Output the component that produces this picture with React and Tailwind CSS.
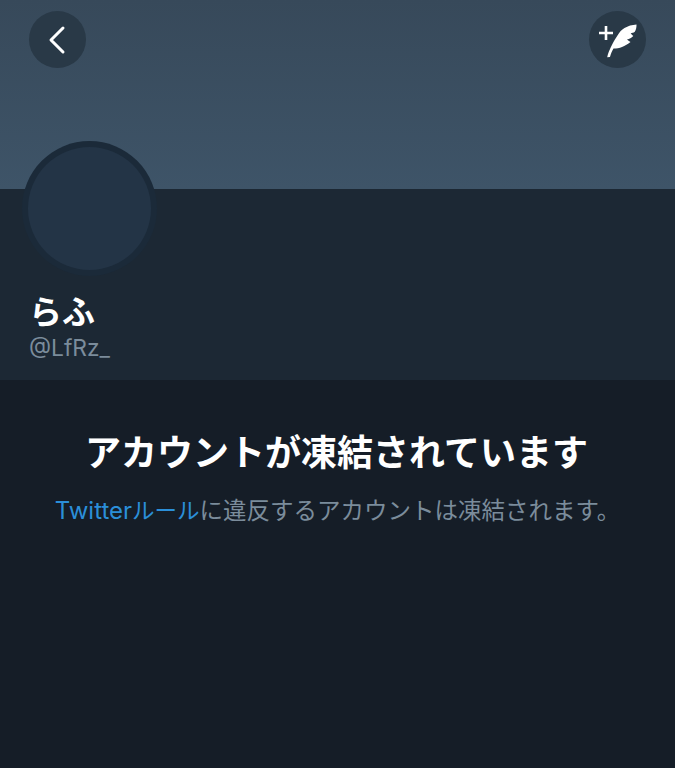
import { ChevronLeft } from "lucide-react";

const cjk = "font-['Inter','Noto_Sans_CJK_JP',sans-serif]";

const RoundButton = ({ children }) => (
  <button className="w-[57px] h-[57px] rounded-full bg-[#293947] flex items-center justify-center">
    {children}
  </button>
);

const App = () => {
  return (
    <div className={`w-[675px] h-[768px] flex flex-col bg-[#151d27] overflow-hidden ${cjk}`}>
      {/* Header banner */}
      <div className="h-[189px] shrink-0 bg-gradient-to-b from-[#37495a] to-[#3e5468] flex justify-between items-start pt-[11px] px-[29px]">
        <RoundButton>
          <ChevronLeft className="w-[48px] h-[48px] text-white -ml-[2px]" strokeWidth={1.5} />
        </RoundButton>
        <RoundButton>
          <svg width="57" height="57" viewBox="0 0 57 57">
            <path d="M10 22h14M17 15v14" stroke="#fff" strokeWidth="2.6" fill="none" />
            <path
              d="M47.500 13.500C43 13.800 39 15 35.500 17C32.500 18.700 30.500 21.300 28.800 24C26.800 27 25.200 29.500 23.800 32.300C22.300 35 21 37.800 19.800 40.700C19.100 42.500 18.500 44.400 18.200 46.300L21 46C21.800 43 23 40 24.500 37.500C27.500 37.500 30.500 37 33 36C36 34.800 39 33.200 41.500 31C40 30.200 39 29.400 38 28.500C40.500 28.200 42.500 26.800 44.300 25C43.300 24.200 42.400 23.300 41.700 22.300C43 22 44.500 21.700 45.800 20.700C47 19 47.600 16.300 47.500 13.500Z"
              fill="#fff"
            />
          </svg>
        </RoundButton>
      </div>

      {/* Profile */}
      <div className="h-[191px] shrink-0 bg-[#1c2834] px-[22px]">
        <div className="w-[135px] h-[135px] -mt-[48px] rounded-full bg-[#1b2a39] p-[6px]">
          <div className="w-full h-full rounded-full bg-[#233446]" />
        </div>
        <div className="mt-[14px] pl-[7px] text-[33px] leading-[44px] font-bold text-white">らふ</div>
        <div className="pl-[7px] text-[22.800px] leading-[28px] text-[#7b8c9b]">@LfRz_</div>
      </div>

      {/* Suspended notice */}
      <div className="flex-1 flex flex-col items-center pt-[49px]">
        <h1 className="pr-[2px] text-[36px] leading-[48px] font-bold text-white whitespace-nowrap">
          アカウントが凍結されています
        </h1>
        <p className="mt-[16px] text-[23.500px] leading-[36px] text-[#7b8c9b] whitespace-nowrap">
          <span className="text-[24px] text-[#2b8fd9]">Twitter</span>
          <span className="text-[22.500px] text-[#2b8fd9]">ルール</span>に違反するアカウントは凍結されます。
        </p>
      </div>
    </div>
  );
};

export default App;
